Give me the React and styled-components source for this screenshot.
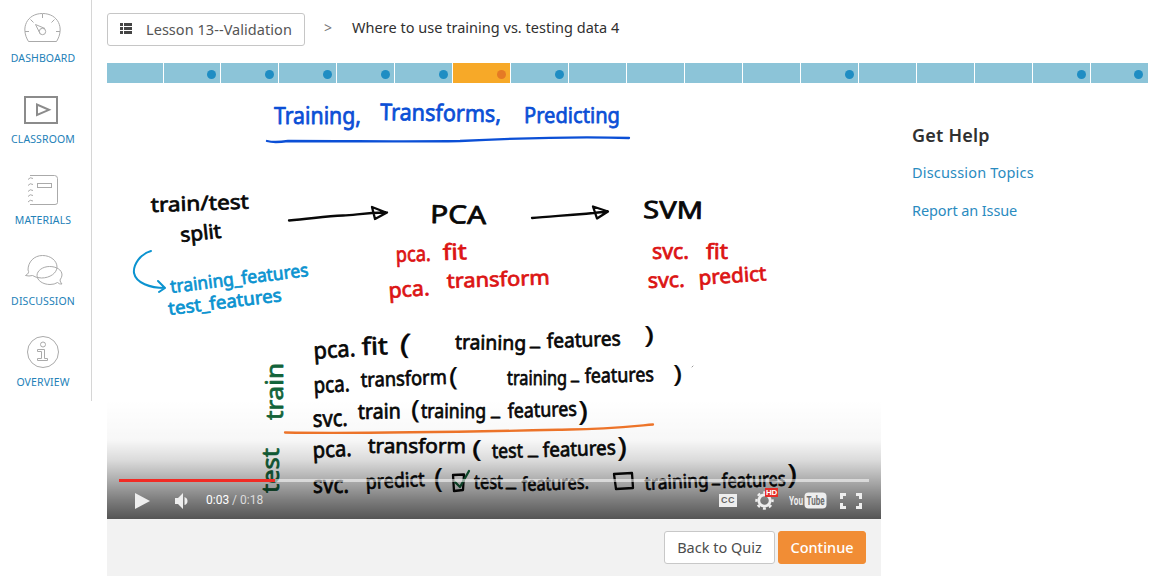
import React from 'react';
import styled, { createGlobalStyle } from 'styled-components';

const GlobalStyle = createGlobalStyle`
  * { box-sizing: border-box; }
  body {
    margin: 0;
    background: #fff;
    color: #303030;
    font-family: 'Noto Sans', 'Open Sans', sans-serif;
    font-size: 14.5px;
    overflow: hidden;
  }
`;

const Page = styled.div`
  display: flex;
  align-items: flex-start;
  width: 1170px;
  height: 578px;
`;

const Sidebar = styled.nav`
  width: 92px;
  height: 401px;
  padding: 8px 5px 0 0;
  border-right: 1px solid #d6d6d6;
`;

const NavItem = styled.a`
  display: flex;
  flex-direction: column;
  align-items: center;
  height: 81px;
  color: #2381b8;
  font-size: 10.5px;
  line-height: 14px;
  letter-spacing: 0.12px;
  text-transform: uppercase;
  white-space: nowrap;

  svg {
    display: block;
    width: 40px;
    height: 40px;
    margin-bottom: 3px;
    fill: none;
    stroke: #aaa;
    stroke-width: 1;
  }
`;

const Main = styled.main`
  width: 1041px;
  margin-left: 15px;
`;

const Breadcrumb = styled.header`
  display: flex;
  align-items: center;
  height: 63px;
  padding-bottom: 4px;
`;

const LessonButton = styled.button`
  display: flex;
  align-items: center;
  gap: 14px;
  width: 198px;
  height: 33px;
  padding: 0 0 2px 12px;
  border: 1px solid #c6c6c6;
  border-radius: 3px;
  background: #fff;
  color: #555;
  font: 14.5px/20px 'Noto Sans', sans-serif;
  letter-spacing: 0.05px;
  white-space: nowrap;
`;

const Separator = styled.span`
  width: 47px;
  padding: 0 0 3px 19px;
  color: #777;
  font-size: 14px;
  line-height: 20px;
`;

const Title = styled.span`
  padding-bottom: 5px;
  color: #303030;
  line-height: 20px;
  letter-spacing: 0.02px;
  white-space: nowrap;
`;

const Progress = styled.div`
  display: grid;
  grid-template-columns: 57px 57px repeat(15, 58px) 57px;
  height: 20px;
`;

const Segment = styled.div`
  display: flex;
  align-items: center;
  justify-content: flex-end;
  padding: 3px 4px 0 0;
  border-right: 1px solid #fff;
  background: ${(p) => (p.$active ? '#f7a928' : '#8cc4d8')};

  &:last-child { border-right: 0; padding-right: 5px; }
`;

const Dot = styled.i`
  width: 9px;
  height: 9px;
  border-radius: 50%;
  background: ${(p) => (p.$active ? '#e57a25' : '#1f8dc3')};
`;

const Content = styled.div`
  display: flex;
`;

const Lesson = styled.section`
  width: 774px;
`;

const Player = styled.div`
  position: relative;
  height: 436px;
  overflow: hidden;
  background: #fff;
`;

const Board = styled.svg`
  display: block;
  width: 774px;
  height: 436px;
  fill: none;
  stroke-linecap: round;
  stroke-linejoin: round;
  stroke-width: 2.3;
`;

const Word = styled.text`
  font-family: 'Noto Sans', sans-serif;
  font-size: ${(p) => p.$size}px;
  font-weight: 400;
  fill: ${(p) => p.$ink};
  stroke: ${(p) => p.$ink};
  stroke-width: ${(p) => (p.$thin ? 0.2 : 0.75)};
`;

const Overlay = styled.div`
  position: absolute;
  inset: auto 0 0 0;
  height: 119px;
  display: flex;
  flex-direction: column;
  justify-content: flex-end;
  padding: 0 12px;
  background: linear-gradient(
    rgba(0, 0, 0, 0) 0,
    rgba(0, 0, 0, 0.03) 40px,
    rgba(0, 0, 0, 0.14) 60px,
    rgba(0, 0, 0, 0.32) 80px,
    rgba(0, 0, 0, 0.51) 100px,
    rgba(0, 0, 0, 0.67) 119px
  );
`;

const Track = styled.div`
  height: 3px;
  background: rgba(255, 255, 255, 0.55);
`;

const Played = styled.div`
  width: 156px;
  height: 3px;
  background: #f12b24;
`;

const Controls = styled.div`
  display: flex;
  align-items: center;
  height: 37px;
  padding: 0 7px 0 16px;
  font-family: Roboto, sans-serif;

  svg { display: block; flex: none; fill: #eee; }
`;

const Volume = styled.svg`
  width: 13px;
  height: 16px;
  margin-left: 25px;
`;

const Time = styled.span`
  margin: -1px auto 0 18px;
  color: #dcdcdc;
  font-size: 12px;
  line-height: 16px;

  b { color: #fff; font-weight: 400; }
`;

const Captions = styled.span`
  width: 18px;
  height: 13px;
  margin-right: 18px;
  background: #eee;
  color: #666;
  font: 700 9px/13px 'Liberation Sans', sans-serif;
  letter-spacing: 0.4px;
  text-align: center;
`;

const Settings = styled.span`
  position: relative;
  margin-right: 15px;
`;

const Quality = styled.span`
  position: absolute;
  left: 10px;
  top: -3px;
  width: 13px;
  height: 9px;
  background: #e52d27;
  color: #fff;
  font: 700 8px/9px 'Liberation Sans', sans-serif;
  letter-spacing: -0.2px;
  text-align: center;
`;

const YouTube = styled.svg`
  width: 38px;
  height: 17px;
  margin-right: 13px;
  font-family: Roboto, sans-serif;
  font-size: 13px;
  font-weight: 700;
`;

const LessonFooter = styled.footer`
  display: flex;
  justify-content: flex-end;
  gap: 3px;
  height: 57px;
  padding: 12px 15px 0 0;
  background: #f2f2f2;
`;

const ActionButton = styled.button`
  width: ${(p) => p.$width}px;
  height: 33px;
  padding: 0 0 2px;
  border: 1px solid ${(p) => (p.$primary ? '#f18d35' : '#c8c8c8')};
  border-radius: 3px;
  background: ${(p) => (p.$primary ? '#f18d35' : '#fff')};
  color: ${(p) => (p.$primary ? '#fff' : '#4c4c4c')};
  font: ${(p) => (p.$primary ? 500 : 400)} 14.5px/20px 'Noto Sans', sans-serif;
  white-space: nowrap;
`;

const Help = styled.aside`
  display: flex;
  flex-direction: column;
  padding: 40px 0 0 31px;
`;

const HelpTitle = styled.h2`
  margin: 0 0 14px;
  font-size: 18px;
  font-weight: 600;
  line-height: 25px;
  letter-spacing: 0.2px;
  white-space: nowrap;
`;

const HelpLink = styled.a`
  margin-bottom: 18px;
  color: #2a8bbf;
  font-size: 14.5px;
  line-height: 20px;
  letter-spacing: ${(p) => p.$spacing}px;
  white-space: nowrap;
`;

const BLUE = '#0b4fd6';
const CYAN = '#0b93d0';
const RED = '#dc1414';
const BLACK = '#080808';
const GREEN = '#12633a';

/* text, x, baseline, drawn width, font size, rotation in degrees, ink */
const words = [
  ['Training,', 274, 124, 87, 23, 0, BLUE],
  ['Transforms,', 380, 120, 121, 23, 1, BLUE],
  ['Predicting', 524, 123, 96, 22, 0, BLUE],
  ['train/test', 151, 212, 98, 20, -2, BLACK],
  ['split', 181, 242, 41, 20, -6, BLACK],
  ['training_features', 171, 293, 139, 18, -7, CYAN],
  ['test_features', 169, 315, 114, 18, -7, CYAN],
  ['PCA', 430, 223, 56, 25, 1, BLACK],
  ['SVM', 643, 218, 60, 24, 1, BLACK],
  ['pca.', 396, 262, 35, 21, -2, RED],
  ['fit', 443, 260, 24, 22, -2, RED],
  ['pca.', 389, 298, 41, 21, -4, RED],
  ['transform', 447, 288, 103, 20, -2, RED],
  ['svc.', 652, 259, 37, 21, 0, RED],
  ['fit', 706, 259, 22, 21, 0, RED],
  ['svc.', 648, 288, 37, 21, -2, RED],
  ['predict', 699, 285, 68, 20, -4, RED],
  ['pca.', 314, 359, 42, 23, -4, BLACK],
  ['fit', 362, 355, 26, 24, -2, BLACK],
  ['(', 399, 353, 11, 28, 5, BLACK],
  ['training', 455, 349, 71, 20, 1, BLACK],
  ['_', 530, 345, 10, 20, 0, BLACK],
  ['features', 547, 348, 74, 20, -2, BLACK],
  [')', 644, 343, 10, 24, 0, BLACK],
  ['pca.', 314, 393, 36, 22, -3, BLACK],
  ['transform', 361, 387, 86, 20, -2, BLACK],
  ['(', 449, 385, 9, 26, 0, BLACK],
  ['training', 507, 385, 60, 20, 0, BLACK],
  ['_', 571, 379, 8, 20, 0, BLACK],
  ['features', 585, 383, 69, 20, -1.5, BLACK],
  [')', 673, 382, 9, 24, 0, BLACK],
  ['svc.', 313, 427, 35, 23, -2, BLACK],
  ['train', 358, 419, 43, 21, -1, BLACK],
  ['(', 411, 418, 9, 25, 0, BLACK],
  ['training', 421, 418, 65, 20, 0, BLACK],
  ['_', 491, 415, 9, 20, 0, BLACK],
  ['features', 508, 418, 69, 20, -2, BLACK],
  [')', 578, 421, 10, 28, 0, BLACK],
  ['pca.', 313, 458, 39, 22, -3, BLACK],
  ['transform', 368, 453, 98, 20, 0, BLACK],
  ['(', 472, 457, 10, 24, 0, BLACK],
  ['test', 492, 458, 31, 20, -1, BLACK],
  ['_', 528, 454, 10, 20, 0, BLACK],
  ['features', 543, 457, 73, 20, -2, BLACK],
  [')', 617, 457, 10, 27, 0, BLACK],
  ['svc.', 313, 493, 36, 23, 0, BLACK],
  ['predict', 366, 489, 59, 20, -3, BLACK],
  ['(', 434, 488, 9, 27, 0, BLACK],
  ['test', 474, 489, 29, 19, 0, BLACK],
  ['_', 506, 486, 10, 19, 0, BLACK],
  ['features.', 522, 491, 67, 19, -2, BLACK],
  ['training', 645, 490, 64, 19, -3, BLACK],
  ['_', 712, 482, 8, 20, 0, BLACK],
  ['features', 722, 488, 64, 20, -2, BLACK],
  [')', 787, 484, 10, 28, 0, BLACK],
  ['train', 283, 420, 57, 24, -90, GREEN],
  ['test', 279, 493, 45, 24, -90, GREEN],
];

const Whiteboard = () => (
  <Board viewBox="107 83 774 436">
    {words.map(([text, x, y, width, size, turn, ink]) => (
      <Word
        key={`${text}-${x}-${y}`}
        x={x}
        y={y}
        textLength={width}
        lengthAdjust="spacingAndGlyphs"
        transform={turn ? `rotate(${turn} ${x} ${y})` : undefined}
        $size={size}
        $ink={ink}
        $thin={text === '(' || text === ')'}
      >
        {text}
      </Word>
    ))}
    <path stroke={BLUE} d="M267 141Q274 143 288 141C360 141 405 142 460 141C520 138 570 136 629 138" />
    <g stroke={BLACK}>
      <path d="M289 220.500C310 219 325 216 343 215.500C356 215 363 213 386 212.500L372 207L375 219L387 212.500" />
      <path d="M532 218C552 216 577 215 608 211.500L593 206.500L597 218.500L608 211.500" />
      <path d="M453 475L464 474.500L463 490L454 491L453 475M614 474L632 473L633 488L616 489L614 474" />
    </g>
    <path stroke={CYAN} strokeWidth="2" d="M151 251C140 254 133 265 134 273C136 283 150 288 165 288M158 281L165 288L159 292" />
    <path stroke="#f2762a" d="M285 432.500C370 434 500 431 570 429.500C605 429 624 427 653 424.500" />
    <path stroke={GREEN} d="M455 482L460 487L469 471" />
    <path stroke="#999" strokeWidth="1" d="M692 367L693 366" />
  </Board>
);

const nav = [
  {
    label: 'Dashboard',
    icon: (
      <>
        <path d="M5.500 33.500C-3 20 4 5.500 19.500 5.500S42 20 33.500 33.500ZM19.500 6V10M2 23.500H6M33 23.500H37M7.500 11.500L10.500 14.500M31.500 11.500L28.500 14.500M12.500 16.500L22 20.500M12.500 16.500L17 25.500" />
        <circle cx="19.500" cy="23.500" r="3.200" />
      </>
    ),
  },
  {
    label: 'Classroom',
    icon: (
      <g stroke="#8b8b8b" strokeWidth="2">
        <rect x="2" y="8" width="32" height="26" />
        <path d="M14 15.500V26L26 20.800Z" />
      </g>
    ),
  },
  {
    label: 'Materials',
    icon: (
      <>
        <path d="M7 5.500H31.500Q34.500 5.500 34.500 8.500V32.500Q34.500 34.500 32 34.500H7" />
        <rect x="14.500" y="13.500" width="14" height="4" />
        <path d="M5 9.500Q7 6.500 10 8.500M5 15.500Q7 12.500 10 14.500M5 21.500Q7 18.500 10 20.500M5 26.500Q7 23.500 10 25.500M5 32Q7 29 10 31" />
      </>
    ),
  },
  {
    label: 'Discussion',
    icon: (
      <>
        <path d="M5 19C5 11 11 4.500 19.500 4.500S34 10 34 16S27 27 18.500 27Q13 27 9.500 24.500Q6 25.500 2.500 24.500Q7 22 5 19Z" />
        <path d="M37 29Q39 26 39 24C39 18.500 33 15.500 26.500 15.500S14 19.500 14 24.500S20 33.500 27 33.500Q31.500 33.500 34.500 31.500Q36.500 33.500 39 33Q37 31 37 29Z" />
      </>
    ),
  },
  {
    label: 'Overview',
    icon: (
      <>
        <circle cx="20" cy="20" r="15.500" />
        <circle cx="20" cy="12.500" r="2.500" />
        <path d="M14.500 17.500H21.500V26.500H24.500V28.500H14.500V26.500H18.500V19.500H14.500Z" />
      </>
    ),
  },
];

const dotted = [1, 2, 3, 4, 5, 6, 7, 12, 16, 17];

export default function App() {
  return (
    <>
      <GlobalStyle />
      <Page>
        <Sidebar>
          {nav.map(({ label, icon }) => (
            <NavItem key={label}>
              <svg viewBox="0 0 40 40">{icon}</svg>
              {label}
            </NavItem>
          ))}
        </Sidebar>
        <Main>
          <Breadcrumb>
            <LessonButton>
              <svg width="12" height="11" fill="#444">
                <path d="M0 0H3V3H0ZM4 0H12V3H4ZM0 4H3V7H0ZM4 4H12V7H4ZM0 8H3V11H0ZM4 8H12V11H4Z" />
              </svg>
              Lesson 13--Validation
            </LessonButton>
            <Separator>&gt;</Separator>
            <Title>Where to use training vs. testing data 4</Title>
          </Breadcrumb>
          <Progress>
            {Array.from({ length: 18 }, (_, i) => (
              <Segment key={i} $active={i === 6}>
                {dotted.includes(i) && <Dot $active={i === 6} />}
              </Segment>
            ))}
          </Progress>
          <Content>
            <Lesson>
              <Player>
                <Whiteboard />
                <Overlay>
                  <Track><Played /></Track>
                  <Controls>
                    <svg width="15" height="16"><path d="M0 0L15 8L0 16Z" /></svg>
                    <Volume viewBox="0 0 13 16">
                      <path d="M0 5H3L8 0V16L3 11H0ZM9.500 4Q12.500 5 12.500 8T9.500 12Z" />
                    </Volume>
                    <Time><b>0:03</b> / 0:18</Time>
                    <Captions>CC</Captions>
                    <Settings>
                      <svg width="19" height="19" viewBox="0 0 19 19">
                        <circle cx="9.500" cy="9.500" r="5.700" fill="none" stroke="#eee" strokeWidth="2.800" />
                        <circle cx="9.500" cy="9.500" r="8" fill="none" stroke="#eee" strokeWidth="2.400" strokeDasharray="3 3.283" strokeDashoffset="1.500" />
                      </svg>
                      <Quality>HD</Quality>
                    </Settings>
                    <YouTube viewBox="0 0 38 17">
                      <text x="0" y="13" textLength="14" lengthAdjust="spacingAndGlyphs">You</text>
                      <rect x="15.500" y="0.500" width="22" height="16" rx="4" />
                      <text x="17.500" y="13" fill="#707070" textLength="18" lengthAdjust="spacingAndGlyphs">Tube</text>
                    </YouTube>
                    <svg width="22" height="16">
                      <path d="M0 0H6V3H3V6H0ZM16 0H22V6H19V3H16ZM0 10H3V13H6V16H0ZM19 10H22V16H16V13H19Z" />
                    </svg>
                  </Controls>
                </Overlay>
              </Player>
              <LessonFooter>
                <ActionButton $width={111}>Back to Quiz</ActionButton>
                <ActionButton $width={88} $primary>Continue</ActionButton>
              </LessonFooter>
            </Lesson>
            <Help>
              <HelpTitle>Get Help</HelpTitle>
              <HelpLink $spacing={0.18}>Discussion Topics</HelpLink>
              <HelpLink $spacing={-0.1}>Report an Issue</HelpLink>
            </Help>
          </Content>
        </Main>
      </Page>
    </>
  );
}
